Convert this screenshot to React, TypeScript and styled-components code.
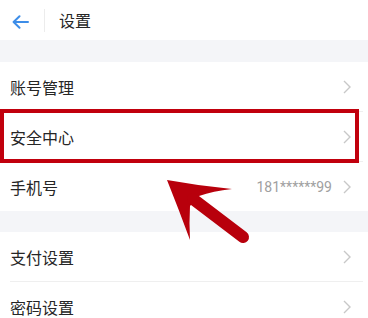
import React from 'react';
import styled, { createGlobalStyle } from 'styled-components';

const GlobalStyle = createGlobalStyle`
  html, body {
    margin: 0;
    padding: 0;
    background: #ffffff;
  }
  body {
    font-family: "Noto Sans CJK SC", "Noto Sans", sans-serif;
  }
`;

const Page = styled.div`
  position: relative;
  width: 368px;
  height: 318px;
  overflow: hidden;
  background: #ffffff;
`;

// header bar
const Header = styled.div`
  display: flex;
  align-items: center;
  height: 40px;
  padding-left: 12px;
  box-sizing: border-box;
`;

const BackButton = styled.div`
  display: flex;
  width: 17px;
  height: 14px;
  margin-top: 3px;
`;

const HeaderDivider = styled.div`
  width: 1px;
  height: 23px;
  margin-left: 15px;
  background: #ececec;
`;

const Title = styled.div`
  margin-left: 14px;
  font-size: 16px;
  color: #262626;
  line-height: 1;
  margin-top: -1px;
`;

const Gap = styled.div<{ $h: number }>`
  height: ${(p) => p.$h}px;
  background: #f4f5f8;
`;

const Group = styled.div`
  background: #fff;
`;

const Row = styled.div<{ $highlight?: boolean }>`
  position: relative;
  display: flex;
  align-items: center;
  height: 49px;
  padding: 0 17px 0 10px;
  box-sizing: border-box;

  ${(p) =>
    p.$highlight &&
    `
    &::after {
      content: '';
      position: absolute;
      left: 0;
      right: 9px;
      top: -3px;
      bottom: -2px;
      border: 4px solid #c1000d;
      pointer-events: none;
    }
  `}
`;

const Label = styled.div`
  flex: 1;
  font-size: 16px;
  color: #262626;
`;

const Value = styled.div`
  font-family: "Roboto", "Liberation Sans", sans-serif;
  font-size: 14px;
  color: #a0a0a0;
  margin-right: 11px;
`;

const Separator = styled.div`
  height: 1px;
  margin: 0 5px 0 10px;
  background: #efefef;
`;

const Pointer = styled.svg`
  position: absolute;
  left: 155px;
  top: 165px;
  width: 100px;
  height: 85px;
`;

const Chevron = () => (
  <svg width="8" height="14" viewBox="0 0 8 14">
    <path d="M1 1 L7 7 L1 13" fill="none" stroke="#c8c8c8" strokeWidth="1.4" />
  </svg>
);

const BackArrow = () => (
  <svg width="17" height="14" viewBox="0 0 17 14">
    <path
      d="M16 7 H2 M7.5 1.2 L1.6 7 L7.5 12.8"
      fill="none"
      stroke="#3d8de8"
      strokeWidth="2"
      strokeLinecap="round"
      strokeLinejoin="round"
    />
  </svg>
);

function SettingRow({ label, value, highlight }: { label: string; value?: string; highlight?: boolean }) {
  return (
    <Row $highlight={highlight}>
      <Label>{label}</Label>
      {value && <Value>{value}</Value>}
      <Chevron />
    </Row>
  );
}

export default function App() {
  return (
    <>
      <GlobalStyle />
      <Page>
        <Header>
          <BackButton>
            <BackArrow />
          </BackButton>
          <HeaderDivider />
          <Title>设置</Title>
        </Header>
        <Gap $h={22} />
        <Group>
          <SettingRow label="账号管理" />
          <Separator />
          <SettingRow label="安全中心" highlight />
          <Separator />
          <SettingRow label="手机号" value="181******99" />
        </Group>
        <Gap $h={21} />
        <Group>
          <SettingRow label="支付设置" />
          <Separator />
          <SettingRow label="密码设置" />
        </Group>

        {/* red annotation arrow pointing at the highlighted row */}
        <Pointer viewBox="0 0 100 85">
          <path
            d="M12 15 Q45 21 77 24 Q58 26 44 31 L35 41 Q34 58 35 75 Q24 45 12 15 Z"
            fill="#b8000c"
          />
          <line x1="38" y1="34" x2="88" y2="72" stroke="#b8000c" strokeWidth="12" strokeLinecap="round" />
        </Pointer>
      </Page>
    </>
  );
}
